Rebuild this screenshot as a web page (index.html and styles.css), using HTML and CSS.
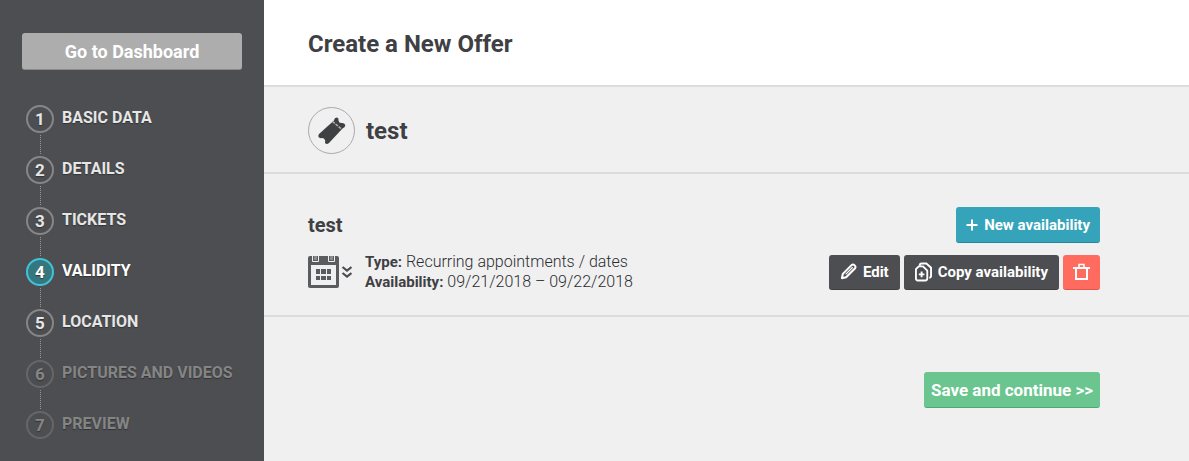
FILE: index.html
```html
<!DOCTYPE html>
<html lang="en">
<head>
    <meta charset="UTF-8">
    <meta name="viewport" content="width=device-width, initial-scale=1.0">
    <title>Create a New Offer</title>
    <link rel="stylesheet" href="styles.css">
</head>
<body>
    <aside class="sidebar">
        <button type="button" class="btn btn-dashboard">Go to Dashboard</button>

        <nav>
            <ol class="steps">
                <li><a href="#basic-data"><span class="number">1</span><span class="label">Basic data</span></a></li>
                <li><a href="#details"><span class="number">2</span><span class="label">Details</span></a></li>
                <li><a href="#tickets"><span class="number">3</span><span class="label">Tickets</span></a></li>
                <li class="active"><a href="#validity"><span class="number">4</span><span class="label">Validity</span></a></li>
                <li><a href="#location"><span class="number">5</span><span class="label">Location</span></a></li>
                <li class="disabled"><a href="#pictures"><span class="number">6</span><span class="label">Pictures and videos</span></a></li>
                <li class="disabled"><a href="#preview"><span class="number">7</span><span class="label">Preview</span></a></li>
            </ol>
        </nav>
    </aside>

    <main>
        <header class="page-header">
            <h1>Create a New Offer</h1>
        </header>

        <section class="offer">
            <span class="offer-icon">
                <svg width="30" height="30" viewBox="0 0 30 30">
                    <path fill="#3e4043" d="M2 18 L17 4.500 Q17.500 1.500 20 1.500 Q22 2 21.500 4.500 Q22 7.500 25 7 Q28 7 28.300 9.500 Q28 11.500 25.500 12.500 L12 27 Q10 28.500 8.500 27.500 Q7.500 26.500 8.300 25 Q7.500 22 5 22 Q2.500 22.500 1.500 21 Q1 19.500 2 18 Z"/>
                    <path fill="none" stroke="#b0b0b0" stroke-width="1.500" stroke-dasharray="3 1" d="M15.500 5.500 L25 13.500"/>
                </svg>
            </span>
            <h2>test</h2>
        </section>

        <section class="availability">
            <div class="row">
                <h3>test</h3>
                <button type="button" class="btn btn-new">
                    <svg width="12" height="12" viewBox="0 0 12 12">
                        <path stroke="#fff" stroke-width="2" d="M6 0.500 V11.500 M0.500 6 H11.500"/>
                    </svg>
                    New availability
                </button>
            </div>
            <div class="row">
                <div class="summary">
                    <svg width="44" height="32" viewBox="0 0 44 32">
                        <path fill="#5b5c5e" fill-rule="evenodd" d="M2 0 H29 Q31 0 31 2 V30 Q31 32 29 32 H2 Q0 32 0 30 V2 Q0 0 2 0 Z M3 9 V29 H28 V9 Z"/>
                        <path fill="none" stroke="#f0f0f0" d="M4.500 0 V5.500 H10.500 V0 M20.500 0 V5.500 H26.500 V0"/>
                        <path fill="#8a8b8c" d="M6 0 H9 V4 H6 Z M22 0 H25 V4 H22 Z"/>
                        <path fill="#5b5c5e" d="M8 13 H12 V18 H8 Z M13 13 H18 V18 H13 Z M19 13 H23 V18 H19 Z M8 20 H12 V24 H8 Z M13 20 H18 V24 H13 Z M19 20 H23 V24 H19 Z"/>
                        <path fill="none" stroke="#4c4d50" stroke-width="2.200" d="M34.500 11 L39 14.500 L43.500 11 M34.500 17 L39 20.500 L43.500 17"/>
                    </svg>
                    <p>
                        <strong>Type:</strong> Recurring appointments / dates<br>
                        <strong>Availability:</strong> 09/21/2018 – 09/22/2018
                    </p>
                </div>
                <div class="actions">
                    <button type="button" class="btn btn-dark">
                        <svg width="17" height="17" viewBox="0 0 18 18">
                            <path fill="none" stroke="#fff" stroke-width="2.200" stroke-linejoin="round" d="M2 16 L3 11.500 L12.500 2 Q14 1 15.500 2.500 Q17 4 16 5.500 L6.500 15 Z"/>
                            <path fill="none" stroke="#fff" stroke-width="1.200" d="M6 12 L13.500 4.500"/>
                        </svg>
                        Edit
                    </button>
                    <button type="button" class="btn btn-dark">
                        <svg width="17" height="20" viewBox="0 0 18 20">
                            <path fill="none" stroke="#fff" stroke-width="2" stroke-linejoin="round" d="M4 4 H8.500 L13 8.500 V17 Q13 19 11 19 H3 Q1 19 1 17 V7 Z"/>
                            <path fill="none" stroke="#fff" stroke-width="2" d="M5 3.500 Q5 1 7 1 H12 L17 5.500 V14 Q17 16 15 16"/>
                            <path stroke="#fff" stroke-width="2" d="M7 9.500 V15.500 M4 12.500 H10"/>
                        </svg>
                        Copy availability
                    </button>
                    <button type="button" class="btn btn-delete" aria-label="Delete">
                        <svg width="17" height="18" viewBox="0 0 17 18">
                            <path fill="none" stroke="#fff" stroke-width="2" d="M0 5 H17 M3 5 V16 H14 V5"/>
                            <path fill="none" stroke="#fff" stroke-width="1.500" d="M6 4 V1.500 H11 V4"/>
                        </svg>
                    </button>
                </div>
            </div>
        </section>

        <div class="form-footer">
            <button type="button" class="btn btn-save">Save and continue &gt;&gt;</button>
        </div>
    </main>
</body>
</html>
```
FILE: styles.css
```css
* {
    box-sizing: border-box;
}

body {
    margin: 0;
    min-height: 100vh;
    display: flex;
    background: #f0f0f0;
    color: #3e4043;
    font-family: Roboto, sans-serif;
    font-size: 15px;
    line-height: 20px;
}

h1, h2, h3, p {
    margin: 0;
}

svg {
    display: block;
    flex: none;
}

/* Buttons */
.btn {
    display: flex;
    align-items: center;
    justify-content: center;
    gap: 6px;
    height: 36px;
    padding: 0 10px;
    border: 0;
    border-bottom: 1px solid;
    border-radius: 3px;
    color: #fff;
    font-family: inherit;
    font-size: 15px;
    font-weight: 700;
    white-space: nowrap;
    cursor: pointer;
}

.btn-dashboard {
    width: 100%;
    height: 37px;
    background: #adadad;
    border-color: #8b8b8b;
    font-size: 18px;
}

.btn-new {
    background: #35a4ba;
    border-color: #2387a0;
}

.btn-dark {
    height: 35px;
    padding: 0 11px;
    background: #4d4e52;
    border-color: #3e3f42;
}

.btn-delete {
    width: 37px;
    height: 35px;
    background: #ff6b5e;
    border-color: #df5549;
}

.btn-save {
    padding: 0 7px;
    background: #6ac58e;
    border-color: #4aa872;
    font-size: 17px;
}

/* Sidebar */
.sidebar {
    flex: 0 0 264px;
    padding: 33px 22px 20px;
    background: #4d4e52;
}

.steps {
    list-style: none;
    margin: 35px 0 0;
    padding: 0 0 0 4px;
}

.steps li {
    height: 51px;
}

.steps li:last-child {
    height: 28px;
}

/* dotted line down to the next step */
.steps li:not(:last-child)::after {
    content: "";
    display: block;
    height: 19px;
    margin: 2px 0 0 14px;
    border-left: 1px dotted #999;
}

.steps a {
    display: flex;
    align-items: center;
    gap: 8px;
    color: #e6e6e6;
    font-size: 16px;
    font-weight: 700;
    text-decoration: none;
    text-shadow: 0 1px 1px #333;
}

.label {
    padding-bottom: 2px;
    text-transform: uppercase;
    white-space: nowrap;
}

.number {
    width: 28px;
    height: 28px;
    border: 2px solid #868686;
    border-radius: 50%;
    font-size: 17px;
    line-height: 24px;
    text-align: center;
}

.steps .active a {
    color: #fff;
}

.active .number {
    border-color: #3fc4d6;
    background: #36777f;
}

.steps .disabled a {
    color: #858585;
}

.disabled .number {
    border-color: #666;
}

/* Main content */
main {
    flex: 1;
    min-width: 0;
}

.page-header,
.offer,
.availability {
    padding: 2px 89px 0 44px;
    border-bottom: 2px solid #dcdcdc;
}

.page-header {
    display: flex;
    align-items: center;
    height: 87px;
    background: #fff;
}

h1, h2 {
    font-size: 24px;
    line-height: 28px;
    font-weight: 700;
}

h3 {
    font-size: 20px;
    font-weight: 700;
}

.offer {
    display: flex;
    align-items: center;
    gap: 11px;
    height: 87px;
}

.offer-icon {
    display: flex;
    align-items: center;
    justify-content: center;
    width: 47px;
    height: 47px;
    border: 1px solid #aaa;
    border-radius: 50%;
}

.availability {
    padding-top: 33px;
    padding-bottom: 23px;
}

.row {
    display: flex;
    align-items: center;
    justify-content: space-between;
}

.row + .row {
    margin-top: 9px;
}

.summary {
    display: flex;
    align-items: center;
    gap: 13px;
}

.summary p {
    color: #2c2d30;
    font-size: 16px;
    font-weight: 300;
}

.summary strong {
    color: #3e4043;
    font-size: 15px;
    font-weight: 700;
}

.actions {
    display: flex;
    gap: 4px;
}

.form-footer {
    display: flex;
    justify-content: flex-end;
    padding: 55px 89px 40px 44px;
}
```
